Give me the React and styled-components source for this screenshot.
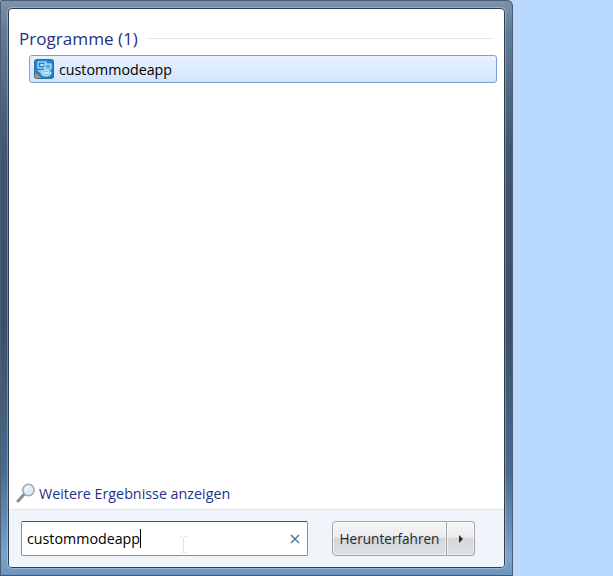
import React from "react";
import styled, { createGlobalStyle } from "styled-components";

const Global = createGlobalStyle`
  html, body { margin: 0; padding: 0; }
  body {
    width: 613px;
    height: 576px;
    overflow: hidden;
    background: #b9d9ff;
    font-family: "Open Sans", "Noto Sans", sans-serif;
  }
`;

const StartMenu = styled.div`
  box-sizing: border-box;
  width: 513px;
  height: 576px;
  padding: 7px;
  display: flex;
  border: 1px solid #4a5d72;
  border-bottom-color: #46586c;
  border-radius: 2px 6px 0 0;
  background: linear-gradient(180deg, #7b93ac 0, #5f7c9b 30px, #3f566f 150px, #3a5069 330px, #486a8e 470px, #7ba3cc 555px, #6f95bb 100%);
`;

const Panel = styled.div`
  flex: 1;
  display: flex;
  flex-direction: column;
  border-radius: 4px;
  border: 1px solid #2f3c4b;
  box-shadow: 0 0 0 1px rgba(255, 255, 255, 0.28);
  background: #fff;
  overflow: hidden;
`;

const Results = styled.div`
  flex: 1;
  display: flex;
  flex-direction: column;
  padding: 17px 7px 0 10px;
`;

const GroupHeader = styled.div`
  display: flex;
  align-items: center;
  gap: 9px;
  height: 24px;
  margin-right: 4px;
  color: #1e3287;
  font-size: 17.1px;
  &::after {
    content: "";
    flex: 1;
    height: 1px;
    background: #e5e5e5;
  }
`;

const ResultRow = styled.div`
  box-sizing: border-box;
  height: 28px;
  margin: 5px 0 0 10px;
  padding-left: 4px;
  display: flex;
  align-items: center;
  gap: 5px;
  border: 1px solid #7da2ce;
  border-radius: 3px;
  background: linear-gradient(180deg, #e8f2fe 0%, #d2e5fc 100%);
  color: #000;
  font-size: 14.25px;
`;

const MoreLink = styled.div`
  display: flex;
  align-items: center;
  gap: 3px;
  height: 24px;
  padding: 0 0 4px 7px;
  color: #1e3287;
  font-size: 14.3px;
`;

const Footer = styled.div`
  height: 58px;
  box-sizing: border-box;
  padding: 11px 29px 0 12px;
  display: flex;
  align-items: flex-start;
  justify-content: space-between;
  border-top: 1px solid #dbe4f1;
  background: #f0f4fb;
`;

const SearchBox = styled.div`
  position: relative;
  box-sizing: border-box;
  width: 287px;
  height: 35px;
  padding: 0 7px 0 5px;
  display: flex;
  align-items: center;
  justify-content: space-between;
  background: #fff;
  border: 1px solid #8e8f8f;
  border-top-color: #4e4e4e;
  border-radius: 2px;
  font-size: 14.25px;
  color: #000;
`;

const Typed = styled.span`
  border-right: 1px solid #000;
  line-height: 19px;
`;

const MouseCursor = styled.svg`
  position: absolute;
  left: 157px;
  top: 14px;
`;

const ShutdownGroup = styled.div`
  display: flex;
  height: 35px;
`;

const ShutdownButton = styled.div`
  box-sizing: border-box;
  height: 35px;
  display: flex;
  align-items: center;
  justify-content: center;
  width: ${(p) => p.$width}px;
  border: 1px solid #a3a5a8;
  border-radius: ${(p) => (p.$arrow ? "0 4px 4px 0" : "4px 0 0 4px")};
  border-left-width: ${(p) => (p.$arrow ? 0 : 1)}px;
  background: linear-gradient(180deg, #f6f6f7 0%, #ececee 45%, #d6d7da 50%, #dedfe2 100%);
  box-shadow: inset 0 0 0 1px rgba(255, 255, 255, 0.55);
  color: #26292e;
  font-size: 13.6px;
`;

const AppIcon = () => (
  <svg width="20" height="20" viewBox="0 0 20 20">
    <rect x="0.5" y="0.5" width="19" height="19" rx="2" fill="#1f86cc" stroke="#2a6f9f" />
    <path d="M1 14 L1 18 Q1 19 2 19 L8 19 Q4 16 1 14Z" fill="#e08a2c" />
    <rect x="4" y="3" width="8" height="6" fill="none" stroke="#d9f0ff" />
    <path d="M8 5v2M6 6h4" stroke="#fff" />
    <rect x="11" y="5" width="6" height="5" fill="#4fb0e5" stroke="#d9f0ff" />
    <ellipse cx="12" cy="14" rx="5" ry="3" fill="#7cc8ef" stroke="#e6f6ff" />
    <path d="M4 12h4M9 14h6" stroke="#fff" />
  </svg>
);

const MagnifierIcon = () => (
  <svg width="20" height="20" viewBox="0 0 20 20">
    <path d="M2 18 L8 11.5" stroke="#8d8d8d" strokeWidth="3" strokeLinecap="round" />
    <circle cx="12.5" cy="7" r="5.7" fill="#dceefa" stroke="#9aa6ad" strokeWidth="1.5" />
    <path d="M9.5 7a3 3 0 0 1 3-3" stroke="#fff" strokeWidth="1.2" fill="none" />
  </svg>
);

const ClearIcon = () => (
  <svg width="10" height="10" viewBox="0 0 10 10">
    <path d="M1 1 L9 9 M9 1 L1 9" stroke="#4a79a5" strokeWidth="1.5" />
  </svg>
);

const ArrowIcon = () => (
  <svg width="6" height="8" viewBox="0 0 6 8">
    <path d="M1 0 L5 4 L1 8Z" fill="#2c2c2c" />
  </svg>
);

export default function App() {
  return (
    <>
      <Global />
      <StartMenu>
        <Panel>
          <Results>
            <GroupHeader>Programme (1)</GroupHeader>
            <ResultRow>
              <AppIcon />
              custommodeapp
            </ResultRow>
          </Results>
          <MoreLink>
            <MagnifierIcon />
            Weitere Ergebnisse anzeigen
          </MoreLink>
          <Footer>
            <SearchBox>
              <Typed>custommodeapp</Typed>
              <MouseCursor width="9" height="17" viewBox="0 0 9 17">
                <path d="M1 .5h2.5L4.5 1.5L5.5 .5H8M4.5 1.5v14M1 16.5h2.5l1-1 1 1H8" fill="none" stroke="#e6e6e6" />
              </MouseCursor>
              <ClearIcon />
            </SearchBox>
            <ShutdownGroup>
              <ShutdownButton $width={115}>Herunterfahren</ShutdownButton>
              <ShutdownButton $arrow $width={28}>
                <ArrowIcon />
              </ShutdownButton>
            </ShutdownGroup>
          </Footer>
        </Panel>
      </StartMenu>
    </>
  );
}
